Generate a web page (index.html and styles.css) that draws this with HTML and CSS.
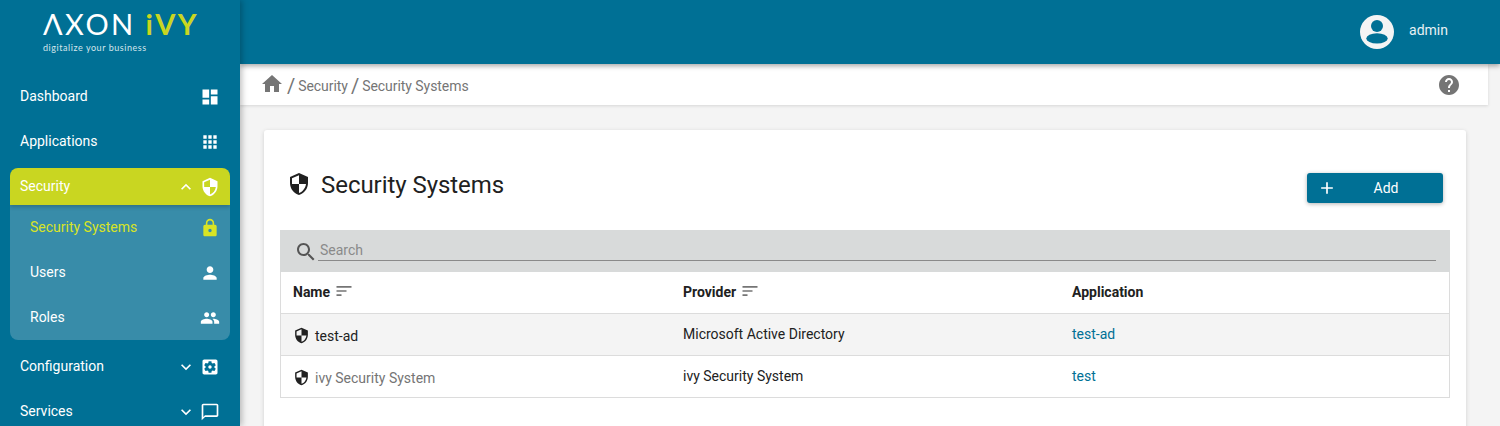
FILE: index.html
```html
<!DOCTYPE html>
<html lang="en">
<head>
    <meta charset="UTF-8">
    <meta name="viewport" content="width=device-width, initial-scale=1.0">
    <title>Security Systems</title>
    <link rel="stylesheet" href="styles.css">
</head>
<body>
    <svg class="sprites" aria-hidden="true">
        <symbol id="i-dashboard" viewBox="0 0 24 24"><path d="M3 13h8V3H3v10zm0 8h8v-6H3v6zm10 0h8V11h-8v10zm0-18v6h8V3h-8z"/></symbol>
        <symbol id="i-apps" viewBox="0 0 24 24"><path d="M4 8h4V4H4v4zm6 12h4v-4h-4v4zm-6 0h4v-4H4v4zm0-6h4v-4H4v4zm6 0h4v-4h-4v4zm6-10v4h4V4h-4zm-6 4h4V4h-4v4zm6 6h4v-4h-4v4zm0 6h4v-4h-4v4z"/></symbol>
        <symbol id="i-security" viewBox="0 0 24 24"><path d="M12 1L3 5v6c0 5.55 3.84 10.74 9 12 5.16-1.26 9-6.45 9-12V5l-9-4zm0 10.99h7c-.53 4.12-3.28 7.79-7 8.94V12H5V6.3l7-3.11v8.8z"/></symbol>
        <symbol id="i-lock" viewBox="0 0 24 24"><path d="M18 8h-1V6c0-2.76-2.24-5-5-5S7 3.24 7 6v2H6c-1.1 0-2 .9-2 2v10c0 1.1.9 2 2 2h12c1.1 0 2-.9 2-2V10c0-1.1-.9-2-2-2zm-6 9c-1.1 0-2-.9-2-2s.9-2 2-2 2 .9 2 2-.9 2-2 2zm3.1-9H8.9V6c0-1.71 1.39-3.1 3.1-3.1 1.71 0 3.1 1.39 3.1 3.1v2z"/></symbol>
        <symbol id="i-person" viewBox="0 0 24 24"><path d="M12 12c2.21 0 4-1.79 4-4s-1.79-4-4-4-4 1.79-4 4 1.79 4 4 4zm0 2c-2.67 0-8 1.34-8 4v2h16v-2c0-2.66-5.33-4-8-4z"/></symbol>
        <symbol id="i-people" viewBox="0 0 24 24"><path d="M16 11c1.66 0 2.99-1.34 2.99-3S17.66 5 16 5c-1.66 0-3 1.34-3 3s1.34 3 3 3zm-8 0c1.66 0 2.99-1.34 2.99-3S9.66 5 8 5C6.34 5 5 6.34 5 8s1.34 3 3 3zm0 2c-2.33 0-7 1.17-7 3.5V19h14v-2.5c0-2.33-4.67-3.5-7-3.5zm8 0c-.29 0-.62.02-.97.05 1.16.84 1.97 1.97 1.97 3.45V19h6v-2.5c0-2.33-4.67-3.5-7-3.5z"/></symbol>
        <symbol id="i-settings" viewBox="0 0 24 24"><path d="M12 10c-1.1 0-2 .9-2 2s.9 2 2 2 2-.9 2-2-.9-2-2-2zm7-7H5c-1.11 0-2 .9-2 2v14c0 1.1.89 2 2 2h14c1.11 0 2-.9 2-2V5c0-1.1-.89-2-2-2zm-1.75 9c0 .23-.02.46-.05.68l1.48 1.16c.13.11.17.3.08.45l-1.4 2.42c-.09.15-.27.21-.43.15l-1.74-.7c-.36.28-.76.51-1.18.69l-.26 1.85c-.03.17-.18.3-.35.3h-2.8c-.17 0-.32-.13-.35-.29l-.26-1.85c-.43-.18-.82-.41-1.18-.69l-1.74.7c-.16.06-.34 0-.43-.15l-1.4-2.42c-.09-.15-.05-.34.08-.45l1.48-1.16c-.03-.23-.05-.46-.05-.69 0-.23.02-.46.05-.68l-1.48-1.16c-.13-.11-.17-.3-.08-.45l1.4-2.42c.09-.15.27-.21.43-.15l1.74.7c.36-.28.76-.51 1.18-.69l.26-1.85c.03-.17.18-.3.35-.3h2.8c.17 0 .32.13.35.29l.26 1.85c.43.18.82.41 1.18.69l1.74-.7c.16-.06.34 0 .43.15l1.4 2.42c.09.15.05.34-.08.45l-1.48 1.16c.03.23.05.46.05.69z"/></symbol>
        <symbol id="i-chat" viewBox="0 0 24 24"><path d="M20 2H4c-1.1 0-2 .9-2 2v18l4-4h14c1.1 0 2-.9 2-2V4c0-1.1-.9-2-2-2zm0 14H6l-2 2V4h16v12z"/></symbol>
        <symbol id="i-down" viewBox="0 0 24 24"><path d="M7.41 8.59L12 13.17l4.59-4.58L18 10l-6 6-6-6z"/></symbol>
        <symbol id="i-up" viewBox="0 0 24 24"><path d="M7.41 15.41L12 10.83l4.59 4.58L18 14l-6-6-6 6z"/></symbol>
        <symbol id="i-home" viewBox="0 0 24 24"><path d="M10 20v-6h4v6h5v-8h3L12 3 2 12h3v8z"/></symbol>
        <symbol id="i-help" viewBox="0 0 24 24"><path d="M12 2C6.48 2 2 6.48 2 12s4.48 10 10 10 10-4.48 10-10S17.52 2 12 2zm1 17h-2v-2h2v2zm2.07-7.75l-.9.92C13.45 12.9 13 13.5 13 15h-2v-.5c0-1.1.45-2.1 1.17-2.83l1.24-1.26c.37-.36.59-.86.59-1.41 0-1.1-.9-2-2-2s-2 .9-2 2H8c0-2.21 1.79-4 4-4s4 1.79 4 4c0 .88-.36 1.68-.93 2.25z"/></symbol>
        <symbol id="i-search" viewBox="0 0 24 24"><path d="M15.5 14h-.79l-.28-.27C15.41 12.59 16 11.11 16 9.5 16 5.91 13.09 3 9.5 3S3 5.91 3 9.5 5.91 16 9.5 16c1.61 0 3.09-.59 4.23-1.57l.27.28v.79l5 4.99L20.49 19l-4.99-5zm-6 0C7.01 14 5 11.99 5 9.5S7.01 5 9.5 5 14 7.01 14 9.5 11.99 14 9.5 14z"/></symbol>
        <symbol id="i-sort" viewBox="0 0 24 24"><path d="M3 18h6v-2H3v2zM3 6v2h18V6H3zm0 7h12v-2H3v2z"/></symbol>
        <symbol id="i-add" viewBox="0 0 24 24"><path d="M19 13h-6v6h-2v-6H5v-2h6V5h2v6h6v2z"/></symbol>
    </svg>

    <aside class="sidebar">
        <div class="logo">
            <div class="logo-name">&Lambda;XON <span class="logo-ivy">iVY</span></div>
            <div class="logo-claim">digitalize your business</div>
        </div>
        <nav>
            <a class="menu-item"><span class="menu-label">Dashboard</span><svg class="icon"><use href="#i-dashboard"/></svg></a>
            <a class="menu-item"><span class="menu-label">Applications</span><svg class="icon"><use href="#i-apps"/></svg></a>
            <div class="menu-group">
                <a class="menu-item menu-open"><span class="menu-label">Security</span><svg class="chevron"><use href="#i-up"/></svg><svg class="icon"><use href="#i-security"/></svg></a>
                <div class="submenu">
                    <a class="menu-item sub-active"><span class="menu-label">Security Systems</span><svg class="icon"><use href="#i-lock"/></svg></a>
                    <a class="menu-item"><span class="menu-label">Users</span><svg class="icon"><use href="#i-person"/></svg></a>
                    <a class="menu-item"><span class="menu-label">Roles</span><svg class="icon"><use href="#i-people"/></svg></a>
                </div>
            </div>
            <a class="menu-item"><span class="menu-label">Configuration</span><svg class="chevron"><use href="#i-down"/></svg><svg class="icon"><use href="#i-settings"/></svg></a>
            <a class="menu-item"><span class="menu-label">Services</span><svg class="chevron"><use href="#i-down"/></svg><svg class="icon"><use href="#i-chat"/></svg></a>
        </nav>
    </aside>

    <div class="main">
        <header class="topbar">
            <svg class="avatar" viewBox="0 0 36 36">
                <circle cx="18" cy="18" r="17" fill="#f4f4f4"/>
                <circle cx="18" cy="12" r="6" fill="#007095"/>
                <ellipse cx="18" cy="24.4" rx="10.7" ry="5.2" fill="#007095"/>
            </svg>
            <span class="user-name">admin</span>
        </header>

        <div class="breadcrumb">
            <svg class="home-icon"><use href="#i-home"/></svg>
            <span class="crumb-sep">/</span>
            <span>Security</span>
            <span class="crumb-sep">/</span>
            <span>Security Systems</span>
            <svg class="help-icon"><use href="#i-help"/></svg>
        </div>

        <section class="card">
            <div class="card-head">
                <svg class="title-icon"><use href="#i-security"/></svg>
                <h1>Security Systems</h1>
                <button type="button" class="add-btn"><svg class="add-icon"><use href="#i-add"/></svg><span>Add</span></button>
            </div>

            <div class="search-bar">
                <svg class="search-icon"><use href="#i-search"/></svg>
                <div class="search-input">Search</div>
            </div>
            <table>
                <thead>
                    <tr>
                        <th class="col-name">Name <svg class="sort-icon"><use href="#i-sort"/></svg></th>
                        <th class="col-provider">Provider <svg class="sort-icon"><use href="#i-sort"/></svg></th>
                        <th>Application</th>
                    </tr>
                </thead>
                <tbody>
                    <tr class="row-shaded">
                        <td class="name-cell"><svg class="row-icon"><use href="#i-security"/></svg>test-ad</td>
                        <td>Microsoft Active Directory</td>
                        <td><a class="link">test-ad</a></td>
                    </tr>
                    <tr>
                        <td class="name-cell name-muted"><svg class="row-icon"><use href="#i-security"/></svg>ivy Security System</td>
                        <td>ivy Security System</td>
                        <td><a class="link">test</a></td>
                    </tr>
                </tbody>
            </table>
        </section>
    </div>
</body>
</html>
```

FILE: styles.css
```css
/* Basic Styles */
html, body {
    height: 100%;
    overflow: hidden;
}
body {
    display: flex;
    margin: 0;
    font-family: Roboto, "Liberation Sans", sans-serif;
    font-size: 14px;
    color: #212121;
    background: #f4f4f4;
}
.sprites {
    display: none;
}
svg {
    fill: currentColor;
}

/* Sidebar */
.sidebar {
    flex: 0 0 240px;
    height: 426px;
    overflow: hidden;
    background: #007095;
    color: #fff;
    box-shadow: 2px 0 6px rgba(0, 0, 0, 0.25);
    z-index: 2;
}
.logo {
    height: 74px;
    box-sizing: border-box;
    padding: 9px 0 0 43px;
}
.logo-name {
    font-family: Lato, sans-serif;
    font-size: 29px;
    font-weight: 400;
    line-height: 30px;
    letter-spacing: 2.4px;
    white-space: nowrap;
}
.logo-ivy {
    color: #c9d621;
    font-weight: 700;
}
.logo-claim {
    font-family: Lato, sans-serif;
    font-size: 9px;
    line-height: 12px;
    letter-spacing: 0.55px;
    margin-top: 3px;
    color: #d5e6ec;
}
.menu-item {
    display: flex;
    align-items: center;
    height: 45px;
    padding: 0 20px;
    box-sizing: border-box;
}
.menu-label {
    flex: 1;
    padding-bottom: 2px;
}
.icon {
    width: 20px;
    height: 20px;
}
.chevron {
    width: 20px;
    height: 20px;
    margin-right: 4px;
}
.menu-group {
    margin: 4px 10px;
    border-radius: 8px;
    overflow: hidden;
}
.menu-open {
    height: 37px;
    padding: 0 10px;
    background: #c9d621;
    box-shadow: 0 2px 4px rgba(0, 0, 0, 0.2);
    position: relative;
}
.submenu {
    background: #388ca9;
}
.submenu .menu-item {
    padding: 0 10px 0 20px;
}
.sub-active {
    color: #d8e425;
}

/* Top bar */
.main {
    flex: 1;
    min-width: 0;
}
.topbar {
    display: flex;
    align-items: center;
    justify-content: flex-end;
    height: 64px;
    padding-right: 52px;
    background: #007095;
    color: #e8f1f4;
    box-shadow: 0 2px 5px rgba(0, 0, 0, 0.35);
    position: relative;
    z-index: 1;
}
.avatar {
    width: 36px;
    height: 36px;
    margin-right: 14px;
}
.user-name {
    margin-bottom: 4px;
}

/* Breadcrumb */
.breadcrumb {
    display: flex;
    align-items: center;
    height: 41px;
    margin-right: 12px;
    padding: 2px 27px 0 20px;
    box-sizing: border-box;
    background: #fff;
    color: #757575;
    box-shadow: 0 1px 3px rgba(0, 0, 0, 0.12);
}
.breadcrumb span {
    margin-right: 3px;
    letter-spacing: -0.05px;
}
.crumb-sep {
    font-size: 20px;
}
.home-icon {
    width: 24px;
    height: 24px;
    margin: 0 3px 3px 0;
}
.help-icon {
    width: 24px;
    height: 24px;
    margin: 0 0 1px auto;
}

/* Card */
.card {
    margin: 25px 34px 0 24px;
    padding: 0 16px 40px;
    background: #fff;
    border-radius: 3px;
    box-shadow: 0 1px 4px rgba(0, 0, 0, 0.15);
}
.card-head {
    display: flex;
    align-items: center;
    height: 100px;
    padding: 10px 7px 0 7px;
    box-sizing: border-box;
}
.title-icon {
    width: 24px;
    height: 24px;
    margin: -2px 10px 0 0;
}
h1 {
    flex: 1;
    margin: 0;
    font-size: 24px;
    font-weight: 400;
    letter-spacing: -0.05px;
}
.add-btn {
    display: flex;
    align-items: center;
    width: 136px;
    height: 30px;
    margin-top: 6px;
    padding: 0 8px 0 10px;
    border: none;
    border-radius: 3px;
    background: #007095;
    color: #fff;
    font-family: inherit;
    font-size: 14px;
    box-shadow: 0 1px 4px rgba(0, 0, 0, 0.3);
}
.add-btn span {
    flex: 1;
    text-align: center;
}
.add-icon {
    width: 20px;
    height: 20px;
}

/* Table */
.search-bar {
    display: flex;
    align-items: center;
    height: 42px;
    padding: 0 14px;
    background: #d8dada;
}
.search-icon {
    width: 24px;
    height: 24px;
    margin-top: 1px;
    color: #555;
}
.search-input {
    flex: 1;
    padding: 0 2px 1px;
    border-bottom: 1px solid #8a8a8a;
    color: #8a8a8a;
    line-height: 18px;
}
table {
    width: 100%;
    border-collapse: separate;
    border-spacing: 0;
    table-layout: fixed;
    border-left: 1px solid #dcdcdc;
    border-right: 1px solid #dcdcdc;
}
th, td {
    height: 42px;
    box-sizing: border-box;
    padding: 0 12px 2px;
    text-align: left;
    border-bottom: 1px solid #dcdcdc;
}
th {
    font-weight: 700;
}
.col-name {
    width: 390px;
}
.col-provider {
    width: 389px;
}
.sort-icon {
    width: 20px;
    height: 20px;
    margin: -6px 0;
    vertical-align: 2px;
    color: #757575;
}
.row-shaded {
    background: #f4f4f4;
}
td.name-cell {
    padding-top: 2px;
    padding-bottom: 0;
}
.row-icon {
    width: 17px;
    height: 17px;
    margin: -2px 5px -2px 0;
    vertical-align: -1px;
    color: #212121;
}
.name-muted {
    color: #757575;
}
.link {
    color: #007095;
}
```
